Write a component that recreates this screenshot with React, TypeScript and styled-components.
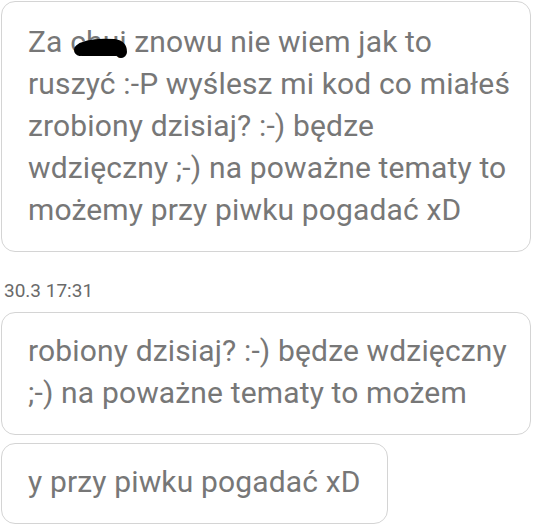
import styled, { createGlobalStyle } from "styled-components";

const GlobalStyle = createGlobalStyle`
  html, body {
    margin: 0;
    padding: 0;
    background: #ffffff;
  }
  body {
    font-family: Roboto, "Noto Sans", sans-serif;
  }
`;

interface BubbleProps {
  $width?: string;
  $padTop?: number;
}

const Page = styled.div`
  display: flex;
  flex-direction: column;
  align-items: flex-start;
  padding: 1px 1px 0 1px;
  width: 533px;
  box-sizing: border-box;
`;

const Bubble = styled.div<BubbleProps>`
  box-sizing: border-box;
  width: ${props => props.$width ?? "530px"};
  border: 1px solid #d4d4d4;
  border-radius: 14px;
  background: #ffffff;
  padding: ${props => props.$padTop ?? 17}px 16px 20px 26px;
  margin-bottom: 8px;
`;

const Line = styled.div`
  font-size: 30px;
  line-height: 42px;
  color: #777777;
  white-space: nowrap;
  letter-spacing: 0.15px;
`;

const Stamp = styled.div`
  font-size: 19px;
  line-height: 20px;
  color: #6a6a6a;
  padding: 21px 0 0 3px;
  margin-bottom: 11px;
`;

const Censored = styled.span`
  position: relative;
  display: inline-block;
`;

const Scribble = styled.svg`
  position: absolute;
  left: 0;
  top: 0;
  width: 60px;
  height: 42px;
  overflow: visible;
`;

const Blot = () => (
  <Scribble viewBox="0 0 60 42">
    <path
      d="M10 29 C 16 24, 30 23, 44 24 C 50 25, 51 27, 51 31"
      fill="none"
      stroke="#000"
      strokeWidth="12"
      strokeLinecap="round"
    />
    <path
      d="M12 30 L 46 30"
      fill="none"
      stroke="#000"
      strokeWidth="10"
      strokeLinecap="round"
    />
  </Scribble>
);

const App = () => {
  return (
    <Page>
      <GlobalStyle />
      <Bubble $padTop={19}>
        <Line>
          Za{" "}
          <Censored>
            chuj
            <Blot />
          </Censored>{" "}
          znowu nie wiem jak to
        </Line>
        <Line>ruszyć :-P wyślesz mi kod co miałeś</Line>
        <Line>zrobiony dzisiaj? :-) będze</Line>
        <Line>wdzięczny ;-) na poważne tematy to</Line>
        <Line>możemy przy piwku pogadać xD</Line>
      </Bubble>
      <Stamp>30.3 17:31</Stamp>
      <Bubble>
        <Line>robiony dzisiaj? :-) będze wdzięczny</Line>
        <Line>;-) na poważne tematy to możem</Line>
      </Bubble>
      <Bubble $width="387px">
        <Line>y przy piwku pogadać xD</Line>
      </Bubble>
    </Page>
  );
};

export default App;
